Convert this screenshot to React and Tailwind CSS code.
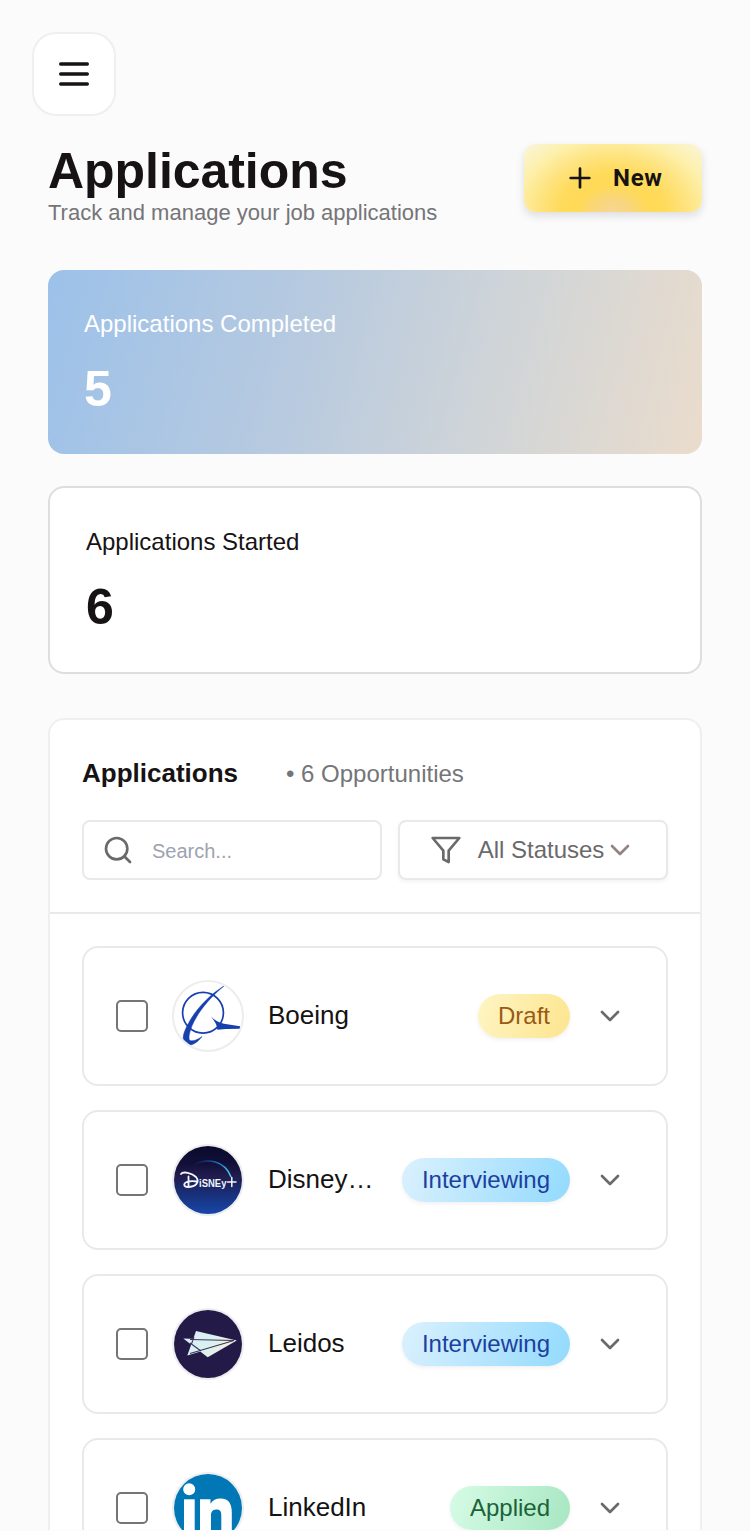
import { useState } from 'react';
import { ChevronDown, Plus, Search } from 'lucide-react';

function MenuIcon() {
  return (
    <svg width="40" height="40" viewBox="0 0 24 24" fill="none" stroke="currentColor" strokeWidth="2" strokeLinecap="round">
      <path d="M4 6h16M4 12h16M4 18h16" />
    </svg>
  );
}

function FilterIcon() {
  return (
    <svg className="shrink-0 text-[#6b696c]" width="32" height="32" viewBox="0 0 24 24" fill="none" stroke="currentColor" strokeWidth="2" strokeLinecap="round" strokeLinejoin="round">
      <polygon points="22 3 2 3 10 12.46 10 19 14 21 14 12.46 22 3" />
    </svg>
  );
}

function BoeingLogo() {
  return (
    <svg width="68" height="68" viewBox="0 0 68 68">
      <circle cx="29" cy="30.700" r="20.400" fill="none" stroke="#173fae" strokeWidth="1.700" />
      <path d="M50 4C38 11 25 24 17.500 36C12 45 8.500 53 9.300 57C10.500 60 14 63 17 63C21 62 25 58.500 28 54.500C24 57.500 19.500 59.500 16 58.500C13.500 57 16 46 22 36C28 25 39 13 50 4Z" fill="#173fae" stroke="#173fae" strokeWidth="0.500" />
      <path d="M37 34.500C41 38.500 45 40.500 50 41.700L66 44.300V46.700L52 47L43.300 47.800C43 42 40 38.500 37 34.500Z" fill="#173fae" />
    </svg>
  );
}

function DisneyLogo() {
  return (
    <svg width="68" height="68" viewBox="0 0 68 68">
      <defs>
        <linearGradient id="disney-bg" x1="0" y1="0" x2="0" y2="1">
          <stop offset="0" stopColor="#0a0b2c" />
          <stop offset="0.25" stopColor="#110f38" />
          <stop offset="0.42" stopColor="#201a4a" />
          <stop offset="0.6" stopColor="#1a2768" />
          <stop offset="1" stopColor="#1747a8" />
        </linearGradient>
        <linearGradient id="disney-arc" x1="0" y1="0" x2="1" y2="0">
          <stop offset="0" stopColor="#1a4aa0" stopOpacity="0" />
          <stop offset="0.7" stopColor="#1878c4" />
          <stop offset="1" stopColor="#4fd0ee" />
        </linearGradient>
      </defs>
      <rect width="68" height="68" fill="url(#disney-bg)" />
      <path d="M19 19C34 11 51 15 57 31" fill="none" stroke="url(#disney-arc)" strokeWidth="1.500" />
      <path d="M7 28C9 25 18 27 22 31C26 36 22 41 14 41C9 41 9 37 14 35.500C17 35 20 35 23 35.500M14.500 30.500L14.500 40" fill="none" stroke="#f2f6fb" strokeWidth="1.800" strokeLinecap="round" />
      <text x="25" y="40.500" fontSize="11.500" fontWeight="700" fill="#f2f6fb" fontFamily="'Liberation Sans', sans-serif" textLength="27.500" lengthAdjust="spacingAndGlyphs">iSNEy</text>
      <path d="M57.800 31.500v9M53.500 36h8.500" stroke="#f2f6fb" strokeWidth="1.500" strokeLinecap="round" />
    </svg>
  );
}

function LeidosLogo() {
  return (
    <svg width="68" height="68" viewBox="0 0 68 68">
      <defs>
        <linearGradient id="leidos-wing" x1="0" y1="0" x2="1" y2="0.3">
          <stop offset="0" stopColor="#dcecfa" />
          <stop offset="0.5" stopColor="#d8f1f2" />
          <stop offset="1" stopColor="#f5f0dc" />
        </linearGradient>
      </defs>
      <rect width="68" height="68" fill="#231a47" />
      <path d="M22 21L62.700 30.500L13.300 45.500Z" fill="url(#leidos-wing)" />
      <path d="M9.300 28.500L62.700 30.500L33.700 47.300Z" fill="url(#leidos-wing)" />
      <path d="M16 29.500L60 30.500L16 43.500M20 27L17.500 34M16 33L27 41" fill="none" stroke="#3c3654" strokeWidth="1.100" />
    </svg>
  );
}

function LinkedInLogo() {
  return (
    <svg width="68" height="68" viewBox="0 0 68 68">
      <rect width="68" height="68" fill="#0277b5" />
      <circle cx="15.200" cy="15.300" r="6" fill="#fff" />
      <rect x="10" y="25.300" width="10.700" height="34" fill="#fff" />
      <path d="M26 25.300h10.500v4.500c2-3.400 5.500-5.300 9.800-5.300c9 0 11.500 6 11.500 14.500v21H47.300V42c0-4-.5-6.500-5-6.500s-5.300 3-5.300 6.500v18H26Z" fill="#fff" />
    </svg>
  );
}

const statusStyles = {
  Draft: 'text-[#9a5a15] bg-[linear-gradient(110deg,#fef5c4,#fde58e)]',
  Interviewing: 'text-[#1c3f9f] bg-[linear-gradient(110deg,#dbf1fe,#93dafd)]',
  Applied: 'text-[#1c6239] bg-[linear-gradient(110deg,#d6fce6,#a7e6c1)]',
};

const applications = [
  { company: 'Boeing', status: 'Draft', Logo: BoeingLogo },
  { company: 'Disney…', status: 'Interviewing', Logo: DisneyLogo },
  { company: 'Leidos', status: 'Interviewing', Logo: LeidosLogo },
  { company: 'LinkedIn', status: 'Applied', Logo: LinkedInLogo },
];

function ApplicationRow({ company, status, Logo }) {
  const [checked, setChecked] = useState(false);

  return (
    <div className="flex h-[140px] items-center rounded-2xl border-2 border-[#e9e9ea] bg-white px-8">
      <input
        type="checkbox"
        checked={checked}
        onChange={e => setChecked(e.target.checked)}
        className="size-8 shrink-0 appearance-none rounded-[5px] border-2 border-[#757578] bg-white checked:bg-[#757578]"
      />
      <div className="ml-6 size-[72px] shrink-0 overflow-hidden rounded-full border-2 border-[#ededee]">
        <Logo />
      </div>
      <span className="mb-0.5 ml-6 mr-7 min-w-0 flex-1 truncate text-[26px] leading-9 text-[#141213]">{company}</span>
      <span className={`flex h-11 shrink-0 items-center rounded-full px-5 text-2xl shadow-[0_2px_4px_rgba(0,0,0,0.06)] ${statusStyles[status]}`}>
        {status}
      </span>
      <button className="ml-4 flex size-12 shrink-0 items-center justify-center text-[#6b696c]">
        <ChevronDown size={32} />
      </button>
    </div>
  );
}

export default function App() {
  const [query, setQuery] = useState('');

  return (
    <div className="h-[1531px] bg-[#fbfbfb] font-['Liberation_Sans',Arial,sans-serif] text-[#171314]">
      <div className="h-[1530px] overflow-hidden pt-8">
        <button className="ml-8 flex size-[84px] items-center justify-center rounded-3xl border-2 border-[#efeff0] bg-white">
          <MenuIcon />
        </button>

        <main className="mx-12 mt-7">
          <header className="flex items-start justify-between">
            <div>
              <h1 className="text-[50px] font-bold leading-[54px] tracking-[-0.05px]">Applications</h1>
              <p className="text-[22px] leading-[30px] text-[#757578]">Track and manage your job applications</p>
            </div>
            <button className="flex h-[68px] w-[178px] items-center gap-[17px] rounded-xl bg-[radial-gradient(ellipse_120px_92px_at_50%_100%,#f6d695_0%,#f8d67d_14%,#ffda57_30%,#ffdb5c_44%,#fee380_62%,#fdf0aa_80%,#faf4d4_100%)] pl-10 font-['Roboto',sans-serif] text-2xl font-bold tracking-[0.7px] shadow-[0_4px_8px_rgba(20,20,50,0.12)]">
              <Plus size={32} className="shrink-0" />
              New
            </button>
          </header>

          <section className="mt-[42px] h-[184px] rounded-2xl bg-[linear-gradient(105deg,#9cc1e9,#b5c9e0_36%,#d4d6d6_73%,#eadccc)] p-9 text-white">
            <p className="text-2xl leading-9">Applications Completed</p>
            <p className="mt-[17px] text-[50px] font-bold leading-[60px]">5</p>
          </section>

          <section className="mt-8 h-[188px] rounded-2xl border-2 border-[#dedede] bg-white p-9">
            <p className="text-2xl leading-9">Applications Started</p>
            <p className="mt-[17px] text-[50px] font-bold leading-[60px]">6</p>
          </section>

          <section className="mt-11 rounded-t-2xl border-2 border-b-0 border-[#efefef] bg-white">
            <div className="h-[194px] border-b-2 border-[#e9e9ea] px-8 pt-8">
              <div className="flex h-11 items-start gap-12">
                <h2 className="text-[26px] font-bold leading-[42px]">Applications</h2>
                <span className="text-2xl leading-[44px] text-[#757578]">• 6 Opportunities</span>
              </div>
              <div className="mt-6 flex gap-4">
                <label className="flex h-[60px] w-[300px] items-center rounded-lg border-2 border-[#e9e9ea] bg-white pl-[18px]">
                  <Search size={32} className="shrink-0 text-[#6b696c]" />
                  <input
                    type="text"
                    placeholder="Search..."
                    value={query}
                    onChange={e => setQuery(e.target.value)}
                    className="ml-[18px] mt-0.5 w-[200px] text-xl outline-none placeholder:text-[#9ca3af]"
                  />
                </label>
                <button className="flex h-[60px] flex-1 items-center justify-center rounded-lg border-2 border-[#e9e9ea] bg-white text-2xl text-[#6b696c] shadow-[0_2px_4px_rgba(0,0,0,0.05)]">
                  <FilterIcon />
                  <span className="ml-4">All Statuses</span>
                  <ChevronDown size={32} className="shrink-0 text-[#958383]" />
                </button>
              </div>
            </div>

            <div className="flex flex-col gap-6 px-8 py-8">
              {applications.map(app => (
                <ApplicationRow key={app.company} {...app} />
              ))}
            </div>
          </section>
        </main>
      </div>
    </div>
  );
}
